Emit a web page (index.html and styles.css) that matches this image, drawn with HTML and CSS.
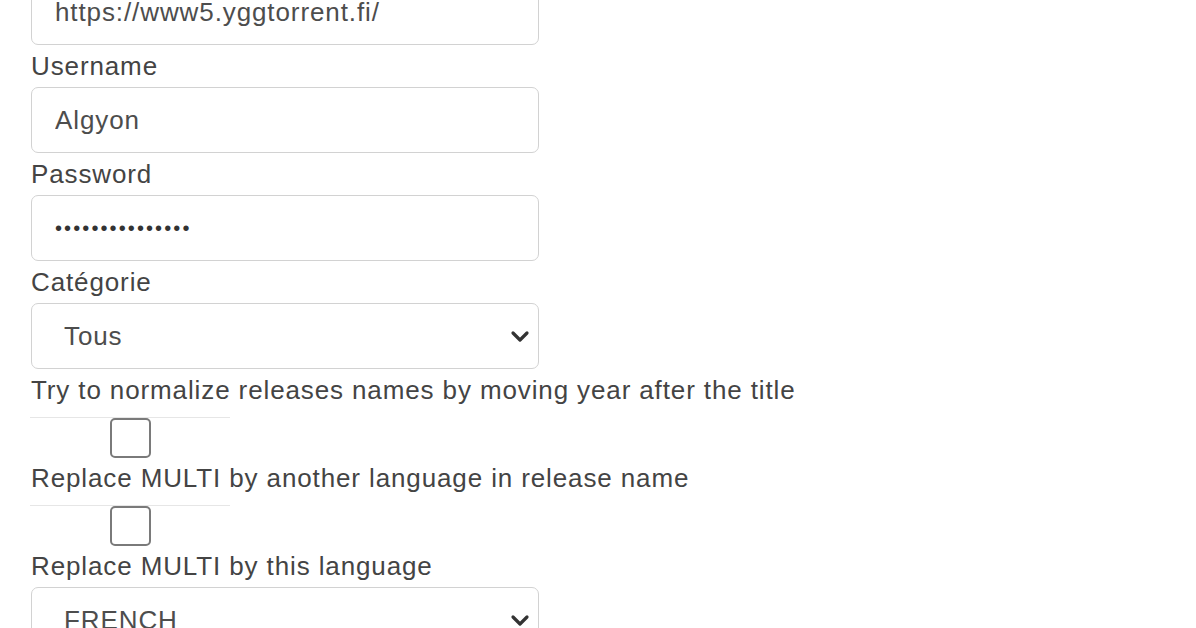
FILE: index.html
```html
<!DOCTYPE html>
<html>
<head>
<meta charset="utf-8">
<link rel="stylesheet" href="styles.css">
</head>
<body>
<form class="form">
  <input class="control" type="text" value="https://www5.yggtorrent.fi/">
  <label class="label">Username</label>
  <input class="control" type="text" value="Algyon">
  <label class="label">Password</label>
  <input class="control password" type="password" value="xxxxxxxxxxxxxxx">
  <label class="label">Catégorie</label>
  <div class="select-wrap">
    <select class="control select"><option>Tous</option></select>
    <svg class="chev" width="20" height="14" viewBox="0 0 20 14"><path d="M3 4 L10 11 L17 4" fill="none" stroke="#333" stroke-width="3.2" stroke-linecap="round" stroke-linejoin="round"/></svg>
  </div>
  <label class="label">Try to normalize releases names by moving year after the title</label>
  <div class="check-row"><input class="check" type="checkbox"></div>
  <label class="label">Replace MULTI by another language in release name</label>
  <div class="check-row"><input class="check" type="checkbox"></div>
  <label class="label">Replace MULTI by this language</label>
  <div class="select-wrap">
    <select class="control select"><option>FRENCH</option></select>
    <svg class="chev" width="20" height="14" viewBox="0 0 20 14"><path d="M3 4 L10 11 L17 4" fill="none" stroke="#333" stroke-width="3.2" stroke-linecap="round" stroke-linejoin="round"/></svg>
  </div>
</form>
</body>
</html>
```
FILE: styles.css
```css
html, body {
  margin: 0;
  padding: 0;
  background: #fff;
}
body {
  font-family: "Liberation Sans", Arial, sans-serif;
  font-size: 26px;
  letter-spacing: 0.88px;
  color: #444;
  overflow: hidden;
}
.form {
  display: flex;
  flex-direction: column;
  align-items: flex-start;
  margin-top: -21px;
  padding-left: 31px;
}
.label {
  display: block;
  height: 42px;
  line-height: 42px;
  white-space: nowrap;
}
.control {
  box-sizing: border-box;
  width: 508px;
  height: 66px;
  margin: 0;
  border: 1.5px solid #d2d2d2;
  border-radius: 7px;
  padding: 0 23px;
  font-family: "Liberation Sans", Arial, sans-serif;
  font-size: 26px;
  letter-spacing: 0.9px;
  color: #4d4d4d;
  background: #fff;
  outline: none;
}
.password {
  font-size: 20px;
  letter-spacing: 2.1px;
  color: #333;
}
.select-wrap {
  position: relative;
  width: 508px;
  height: 66px;
}
.select {
  appearance: none;
  -webkit-appearance: none;
  padding-left: 32px;
}
.chev {
  position: absolute;
  right: 9px;
  top: 26px;
}
.check-row {
  box-sizing: border-box;
  width: 200px;
  height: 40px;
  margin-top: 6px;
  margin-left: -1px;
  border-top: 1px solid #e6e6e6;
  display: flex;
  justify-content: center;
}
.check {
  appearance: none;
  -webkit-appearance: none;
  box-sizing: border-box;
  width: 41px;
  height: 40px;
  margin: 0;
  border: 2px solid #7a7a7a;
  border-radius: 5px;
  background: #fff;
}
```
